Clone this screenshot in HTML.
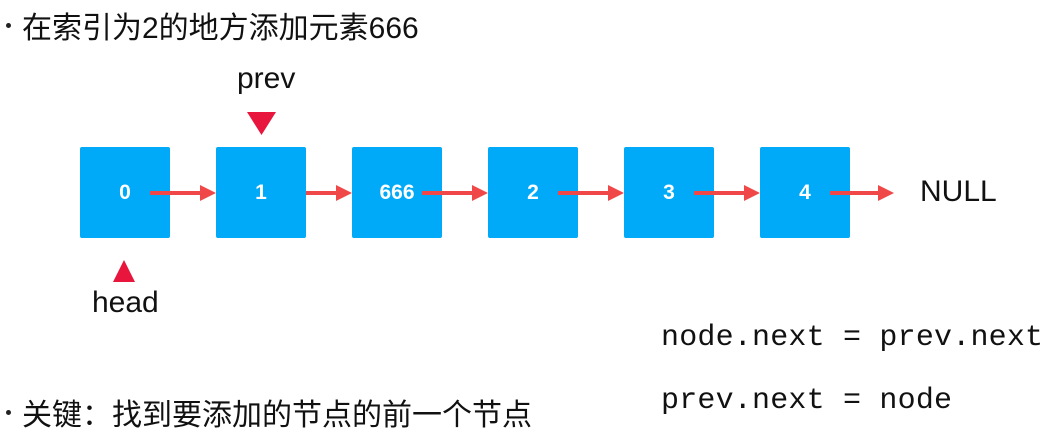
<!DOCTYPE html>
<html><head><meta charset="utf-8"><style>
body{margin:0;width:1050px;height:447px;background:#fff;position:relative;overflow:hidden;font-family:"Liberation Sans","Noto Sans CJK SC",sans-serif;color:#111}
.t{position:absolute;white-space:nowrap}
.box{position:absolute;top:147px;width:90px;height:91px;background:#00aaf8;border-radius:2px;color:#fff;font-weight:bold;font-size:21px;line-height:91px;text-align:center}
.mono{font-family:"Liberation Mono",monospace;font-size:30px;letter-spacing:0.2px}
.dot{position:absolute;width:5px;height:5px;border-radius:50%;background:#222}
</style></head><body>
<div class="dot" style="left:6px;top:23px"></div>
<div class="t" style="left:22px;top:3px;font-size:30px">在索引为2的地方添加元素666</div>
<div class="t" style="left:237px;top:62px;font-size:30px">prev</div>
<div class="box" style="left:80px">0</div>
<div class="box" style="left:216px">1</div>
<div class="box" style="left:352px">666</div>
<div class="box" style="left:488px">2</div>
<div class="box" style="left:624px">3</div>
<div class="box" style="left:760px">4</div>
<svg style="position:absolute;left:0;top:0" width="1050" height="447">
<polygon points="247,112 276,112 261.5,135" fill="#e8153d"/>
<polygon points="113,282 135,282 124,260" fill="#e8153d"/>
<g stroke="#f04848" stroke-width="4"><line x1="150" y1="193" x2="204" y2="193"/><line x1="306" y1="193" x2="340" y2="193"/><line x1="422" y1="193" x2="476" y2="193"/><line x1="558" y1="193" x2="612" y2="193"/><line x1="694" y1="193" x2="748" y2="193"/><line x1="830" y1="193" x2="882" y2="193"/></g>
<g fill="#f04848"><polygon points="200,185 216,193 200,201"/><polygon points="336,185 352,193 336,201"/><polygon points="472,185 488,193 472,201"/><polygon points="608,185 624,193 608,201"/><polygon points="744,185 760,193 744,201"/><polygon points="878,185 894,193 878,201"/></g>
</svg>
<div class="t" style="left:920px;top:175px;font-size:30px">NULL</div>
<div class="t" style="left:92px;top:286px;font-size:30px">head</div>
<div class="t mono" style="left:661px;top:321px">node.next = prev.next</div>
<div class="t mono" style="left:661px;top:384px">prev.next = node</div>
<div class="dot" style="left:6px;top:410px"></div>
<div class="t" style="left:22px;top:390px;font-size:30px">关键：找到要添加的节点的前一个节点</div>
</body></html>
